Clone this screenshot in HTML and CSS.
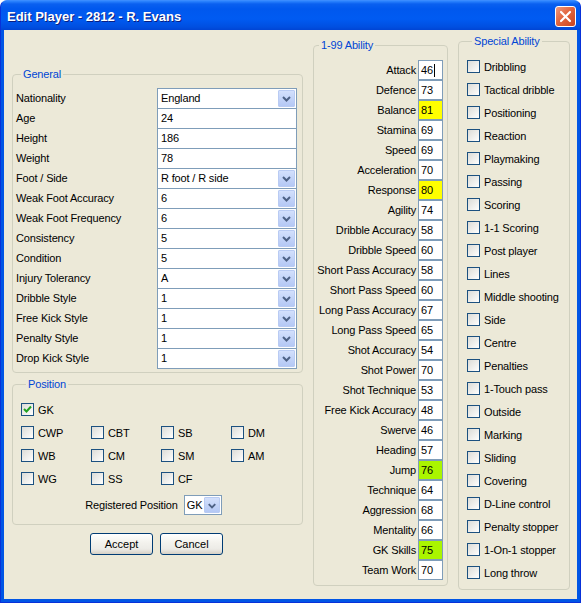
FILE: index.html
```html
<!DOCTYPE html>
<html lang="en">
<head>
    <meta charset="UTF-8">
    <title>Edit Player - 2812 - R. Evans</title>
    <link rel="stylesheet" href="styles.css">
</head>
<body>
<div class="window">
    <div class="titlebar">
        <span class="caption">Edit Player - 2812 - R. Evans</span>
        <span class="close-btn">
            <svg width="13" height="13" viewBox="0 0 13 13"><path d="M2 2 L11 11 M11 2 L2 11" stroke="#fff" stroke-width="2.2" stroke-linecap="round"/></svg>
        </span>
    </div>

    <div class="client">
        <!-- left column: general + position + buttons -->
        <div class="col-left">
            <fieldset class="group general">
                <legend>General</legend>
                <div class="row"><span class="lbl">Nationality</span><div class="combo"><span class="val">England</span><span class="arrow"><svg width="15" height="15" viewBox="0 0 15 15"><path d="M4 6 L7.5 9.5 L11 6" fill="none" stroke="#4D6185" stroke-width="2"/></svg></span></div></div>
                <div class="row"><span class="lbl">Age</span><div class="combo"><span class="val">24</span></div></div>
                <div class="row"><span class="lbl">Height</span><div class="combo"><span class="val">186</span></div></div>
                <div class="row"><span class="lbl">Weight</span><div class="combo"><span class="val">78</span></div></div>
                <div class="row"><span class="lbl">Foot / Side</span><div class="combo"><span class="val">R foot / R side</span><span class="arrow"><svg width="15" height="15" viewBox="0 0 15 15"><path d="M4 6 L7.5 9.5 L11 6" fill="none" stroke="#4D6185" stroke-width="2"/></svg></span></div></div>
                <div class="row"><span class="lbl">Weak Foot Accuracy</span><div class="combo"><span class="val">6</span><span class="arrow"><svg width="15" height="15" viewBox="0 0 15 15"><path d="M4 6 L7.5 9.5 L11 6" fill="none" stroke="#4D6185" stroke-width="2"/></svg></span></div></div>
                <div class="row"><span class="lbl">Weak Foot Frequency</span><div class="combo"><span class="val">6</span><span class="arrow"><svg width="15" height="15" viewBox="0 0 15 15"><path d="M4 6 L7.5 9.5 L11 6" fill="none" stroke="#4D6185" stroke-width="2"/></svg></span></div></div>
                <div class="row"><span class="lbl">Consistency</span><div class="combo"><span class="val">5</span><span class="arrow"><svg width="15" height="15" viewBox="0 0 15 15"><path d="M4 6 L7.5 9.5 L11 6" fill="none" stroke="#4D6185" stroke-width="2"/></svg></span></div></div>
                <div class="row"><span class="lbl">Condition</span><div class="combo"><span class="val">5</span><span class="arrow"><svg width="15" height="15" viewBox="0 0 15 15"><path d="M4 6 L7.5 9.5 L11 6" fill="none" stroke="#4D6185" stroke-width="2"/></svg></span></div></div>
                <div class="row"><span class="lbl">Injury Tolerancy</span><div class="combo"><span class="val">A</span><span class="arrow"><svg width="15" height="15" viewBox="0 0 15 15"><path d="M4 6 L7.5 9.5 L11 6" fill="none" stroke="#4D6185" stroke-width="2"/></svg></span></div></div>
                <div class="row"><span class="lbl">Dribble Style</span><div class="combo"><span class="val">1</span><span class="arrow"><svg width="15" height="15" viewBox="0 0 15 15"><path d="M4 6 L7.5 9.5 L11 6" fill="none" stroke="#4D6185" stroke-width="2"/></svg></span></div></div>
                <div class="row"><span class="lbl">Free Kick Style</span><div class="combo"><span class="val">1</span><span class="arrow"><svg width="15" height="15" viewBox="0 0 15 15"><path d="M4 6 L7.5 9.5 L11 6" fill="none" stroke="#4D6185" stroke-width="2"/></svg></span></div></div>
                <div class="row"><span class="lbl">Penalty Style</span><div class="combo"><span class="val">1</span><span class="arrow"><svg width="15" height="15" viewBox="0 0 15 15"><path d="M4 6 L7.5 9.5 L11 6" fill="none" stroke="#4D6185" stroke-width="2"/></svg></span></div></div>
                <div class="row"><span class="lbl">Drop Kick Style</span><div class="combo"><span class="val">1</span><span class="arrow"><svg width="15" height="15" viewBox="0 0 15 15"><path d="M4 6 L7.5 9.5 L11 6" fill="none" stroke="#4D6185" stroke-width="2"/></svg></span></div></div>
            </fieldset>

            <fieldset class="group position">
                <legend>Position</legend>
                <div class="pos-grid">
                    <label class="chk"><span class="box checked"><svg width="11" height="11" viewBox="0 0 11 11"><path d="M2 5 L4.5 7.5 L9 2.5" fill="none" stroke="#21A121" stroke-width="2"/></svg></span>GK</label>
                    <span></span><span></span><span></span>
                    <label class="chk"><span class="box"></span>CWP</label>
                    <label class="chk"><span class="box"></span>CBT</label>
                    <label class="chk"><span class="box"></span>SB</label>
                    <label class="chk"><span class="box"></span>DM</label>
                    <label class="chk"><span class="box"></span>WB</label>
                    <label class="chk"><span class="box"></span>CM</label>
                    <label class="chk"><span class="box"></span>SM</label>
                    <label class="chk"><span class="box"></span>AM</label>
                    <label class="chk"><span class="box"></span>WG</label>
                    <label class="chk"><span class="box"></span>SS</label>
                    <label class="chk"><span class="box"></span>CF</label>
                    <span></span>
                </div>
                <div class="reg-row">
                    <span>Registered Position</span>
                    <div class="combo small"><span class="val">GK</span><span class="arrow"><svg width="15" height="15" viewBox="0 0 15 15"><path d="M4 6 L7.5 9.5 L11 6" fill="none" stroke="#4D6185" stroke-width="2"/></svg></span></div>
                </div>
            </fieldset>

            <div class="buttons">
                <button class="btn">Accept</button>
                <button class="btn">Cancel</button>
            </div>
        </div>

        <!-- middle column: abilities -->
        <fieldset class="group ability">
            <legend>1-99 Ability</legend>
            <div class="arow"><span>Attack</span><span class="num">46<span class="caret"></span></span></div>
            <div class="arow"><span>Defence</span><span class="num">73</span></div>
            <div class="arow"><span>Balance</span><span class="num yellow">81</span></div>
            <div class="arow"><span>Stamina</span><span class="num">69</span></div>
            <div class="arow"><span>Speed</span><span class="num">69</span></div>
            <div class="arow"><span>Acceleration</span><span class="num">70</span></div>
            <div class="arow"><span>Response</span><span class="num yellow">80</span></div>
            <div class="arow"><span>Agility</span><span class="num">74</span></div>
            <div class="arow"><span>Dribble Accuracy</span><span class="num">58</span></div>
            <div class="arow"><span>Dribble Speed</span><span class="num">60</span></div>
            <div class="arow"><span>Short Pass Accuracy</span><span class="num">58</span></div>
            <div class="arow"><span>Short Pass Speed</span><span class="num">60</span></div>
            <div class="arow"><span>Long Pass Accuracy</span><span class="num">67</span></div>
            <div class="arow"><span>Long Pass Speed</span><span class="num">65</span></div>
            <div class="arow"><span>Shot Accuracy</span><span class="num">54</span></div>
            <div class="arow"><span>Shot Power</span><span class="num">70</span></div>
            <div class="arow"><span>Shot Technique</span><span class="num">53</span></div>
            <div class="arow"><span>Free Kick Accuracy</span><span class="num">48</span></div>
            <div class="arow"><span>Swerve</span><span class="num">46</span></div>
            <div class="arow"><span>Heading</span><span class="num">57</span></div>
            <div class="arow"><span>Jump</span><span class="num green">76</span></div>
            <div class="arow"><span>Technique</span><span class="num">64</span></div>
            <div class="arow"><span>Aggression</span><span class="num">68</span></div>
            <div class="arow"><span>Mentality</span><span class="num">66</span></div>
            <div class="arow"><span>GK Skills</span><span class="num green">75</span></div>
            <div class="arow"><span>Team Work</span><span class="num">70</span></div>
        </fieldset>

        <!-- right column: special abilities -->
        <fieldset class="group special">
            <legend>Special Ability</legend>
            <label class="chk srow"><span class="box"></span>Dribbling</label>
            <label class="chk srow"><span class="box"></span>Tactical dribble</label>
            <label class="chk srow"><span class="box"></span>Positioning</label>
            <label class="chk srow"><span class="box"></span>Reaction</label>
            <label class="chk srow"><span class="box"></span>Playmaking</label>
            <label class="chk srow"><span class="box"></span>Passing</label>
            <label class="chk srow"><span class="box"></span>Scoring</label>
            <label class="chk srow"><span class="box"></span>1-1 Scoring</label>
            <label class="chk srow"><span class="box"></span>Post player</label>
            <label class="chk srow"><span class="box"></span>Lines</label>
            <label class="chk srow"><span class="box"></span>Middle shooting</label>
            <label class="chk srow"><span class="box"></span>Side</label>
            <label class="chk srow"><span class="box"></span>Centre</label>
            <label class="chk srow"><span class="box"></span>Penalties</label>
            <label class="chk srow"><span class="box"></span>1-Touch pass</label>
            <label class="chk srow"><span class="box"></span>Outside</label>
            <label class="chk srow"><span class="box"></span>Marking</label>
            <label class="chk srow"><span class="box"></span>Sliding</label>
            <label class="chk srow"><span class="box"></span>Covering</label>
            <label class="chk srow"><span class="box"></span>D-Line control</label>
            <label class="chk srow"><span class="box"></span>Penalty stopper</label>
            <label class="chk srow"><span class="box"></span>1-On-1 stopper</label>
            <label class="chk srow"><span class="box"></span>Long throw</label>
        </fieldset>
    </div>
</div>
</body>
</html>
```

FILE: styles.css
```css
* {
    margin: 0;
    padding: 0;
    box-sizing: border-box;
}

body {
    font-family: "Liberation Sans", Arial, sans-serif;
    font-size: 11px;
    letter-spacing: -0.15px;
    color: #000;
    background: #fff;
}

.window {
    width: 581px;
    height: 603px;
    background: #0055E5;
    border-radius: 7px 7px 0 0;
    border: 1px solid #0831D9;
    border-top-color: #3A8CFF;
    display: flex;
    flex-direction: column;
    overflow: hidden;
}

/* title bar */
.titlebar {
    height: 29px;
    display: flex;
    align-items: center;
    justify-content: space-between;
    padding: 2px 4px 0 6px;
    background: linear-gradient(to bottom, #2E86FF 0px, #0A60F0 3px, #0058EE 8px, #005BF2 18px, #004FE0 26px, #0044D4 29px);
}

.caption {
    color: #fff;
    font-size: 13px;
    font-weight: bold;
    text-shadow: 1px 1px 0 #0A1E80;
    letter-spacing: 0;
}

.close-btn {
    width: 21px;
    height: 21px;
    border: 1px solid #fff;
    border-radius: 3px;
    background: linear-gradient(135deg, #EE9A80 0%, #E2663F 45%, #C8441D 100%);
    display: flex;
    align-items: center;
    justify-content: center;
}

.client {
    flex: 1;
    margin: 0 3px 3px 3px;
    background: #ECE9D8;
    display: flex;
    align-items: flex-start;
}

/* group boxes */
.group {
    border: 1px solid #D0D0BF;
    border-radius: 4px;
    min-width: 0;
}

.group legend {
    color: #0046D5;
    font-size: 11px;
    line-height: 14px;
    padding: 0 2px;
    margin-left: 5px;
}

.col-left {
    margin-left: 8px;
    margin-top: 37px;
    width: 291px;
}

.general {
    width: 291px;
    padding: 7px 5px 4px 3px;
}

.row {
    height: 20px;
    display: flex;
    align-items: flex-start;
}

.row .lbl {
    flex: 1;
    line-height: 20px;
}

.combo {
    width: 140px;
    height: 21px;
    flex: none;
    margin-bottom: -1px;
    border: 1px solid #7F9DB9;
    background: #fff;
    display: flex;
    align-items: stretch;
    padding: 1px;
}

.combo .val {
    flex: 1;
    padding-left: 2px;
    line-height: 17px;
    white-space: nowrap;
    overflow: hidden;
}

.combo .arrow {
    width: 17px;
    flex: none;
    background: linear-gradient(to bottom, #D3E0FC, #B4C8F5);
    border: 1px solid #B9CBF3;
    border-radius: 1px;
    display: flex;
    align-items: center;
    justify-content: center;
}

.combo.small {
    width: 38px;
    height: 20px;
    margin-bottom: 0;
}

.combo.small .val {
    padding-left: 1px;
}

.combo.small .arrow {
    width: 16px;
}

/* position */
.position {
    margin-top: 4px;
    width: 291px;
    padding: 7px 8px 9px 8px;
}

.pos-grid {
    display: grid;
    grid-template-columns: 70px 70px 70px 70px;
    grid-auto-rows: 23px;
}

.chk {
    display: flex;
    align-items: center;
    gap: 4px;
    white-space: nowrap;
}

.box {
    width: 13px;
    height: 13px;
    flex: none;
    border: 1px solid #1C5180;
    background: linear-gradient(135deg, #DCDCD7 0%, #F4F4F2 70%, #FFFFFF 100%);
    display: flex;
    align-items: center;
    justify-content: center;
}

.reg-row {
    margin-top: 5px;
    display: flex;
    align-items: center;
    justify-content: center;
    gap: 6px;
    padding-right: 8px;
}

.buttons {
    margin-top: 8px;
    display: flex;
    justify-content: center;
    gap: 7px;
    padding-right: 2px;
}

.btn {
    width: 63px;
    height: 22px;
    font-family: "Liberation Sans", Arial, sans-serif;
    font-size: 11px;
    color: #000;
    border: 1px solid #003C74;
    border-radius: 3px;
    background: linear-gradient(to bottom, #FFFFFF 0%, #F4F3EE 40%, #ECEBE6 75%, #D6D0C5 100%);
}

/* abilities */
.ability {
    margin-left: 10px;
    margin-top: 8px;
    width: 135px;
    padding: 8px 4px 5px 0;
}

.arow {
    height: 20px;
    display: flex;
    justify-content: flex-end;
    align-items: center;
    gap: 2px;
    white-space: nowrap;
}

.num {
    width: 25px;
    height: 20px;
    flex: none;
    border: 1px solid #7F9DB9;
    background: #fff;
    padding-left: 2px;
    line-height: 18px;
    display: flex;
    align-items: center;
}

.num.yellow {
    background: #FFFF00;
}

.num.green {
    background: #AAF500;
}

.caret {
    width: 1px;
    height: 13px;
    background: #000;
    margin-left: 1px;
}

/* special abilities */
.special {
    margin-left: 10px;
    margin-top: 4px;
    width: 112px;
    padding: 7px 0 5px 8px;
}

.srow {
    height: 23px;
}
```
